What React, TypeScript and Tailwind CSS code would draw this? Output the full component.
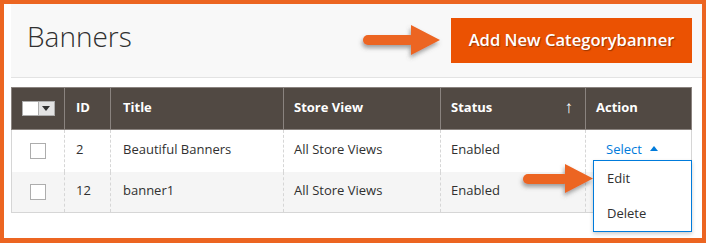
const font = { fontFamily: '"Open Sans", "Liberation Sans", sans-serif' };

interface Banner {
  id: number;
  title: string;
  storeView: string;
  status: string;
}

const banners: Banner[] = [
  { id: 2, title: "Beautiful Banners", storeView: "All Store Views", status: "Enabled" },
  { id: 12, title: "banner1", storeView: "All Store Views", status: "Enabled" },
];

// orange callout arrows drawn over the screenshot
function Arrows() {
  return (
    <svg
      className="pointer-events-none absolute left-0 top-0"
      width="706"
      height="243"
      viewBox="0 0 706 243"
    >
      <defs>
        <filter id="shadow" x="-20%" y="-40%" width="140%" height="200%">
          <feDropShadow dx="-1" dy="3" stdDeviation="2" floodColor="#555" floodOpacity="0.55" />
        </filter>
      </defs>
      <g fill="#ec6521" filter="url(#shadow)">
        <rect x="363" y="35" width="52" height="10" rx="5" />
        <polygon points="411,25 440,40 411,55" />
      </g>
      <g fill="#ec6521" filter="url(#shadow)">
        <rect x="523" y="174" width="46" height="10" rx="5" />
        <polygon points="565,164 593,178.5 565,193" />
      </g>
    </svg>
  );
}

export default function App() {
  return (
    <div className="relative h-[243px] w-[706px] overflow-hidden" style={font}>
      <div className="h-full w-full border-t-4 border-l-4 border-r-4 border-b-[5px] border-[#ec6521] bg-white">
        <div className="pl-[7px]">
          {/* page header */}
          <div className="flex h-[74px] items-center justify-between border-b border-[#e3e3e3] bg-[#f8f8f8] pl-[16px] pr-[10px]">
            <h1 className="mb-[9px] text-[28px] font-light leading-none text-[#303030]">Banners</h1>
            <button className="mb-[1px] h-[45px] w-[241px] bg-[#eb5202] text-[16.6px] font-semibold text-white [text-shadow:1px_1px_1px_rgba(0,0,0,0.35)]">
              Add New Categorybanner
            </button>
          </div>

          {/* grid */}
          <table className="mt-[9px] w-[680px] table-fixed border-collapse text-[13px] leading-[18px] text-[#303030]">
            <colgroup>
              <col className="w-[53px]" />
              <col className="w-[46px]" />
              <col className="w-[173px]" />
              <col className="w-[157px]" />
              <col className="w-[145px]" />
              <col className="w-[106px]" />
            </colgroup>
            <thead>
              <tr className="h-[42px] bg-[#514943] text-left text-white">
                <th className="border border-[#8a837f] p-0">
                  <div className="flex justify-center">
                    <div className="flex h-[15px] border border-[#adadad]">
                      <span className="h-full w-[15px] bg-white" />
                      <span className="flex h-full w-[16px] items-center justify-center border-l border-[#adadad] bg-[#e3e3e3]">
                        <span className="h-0 w-0 border-x-[4px] border-t-[5px] border-x-transparent border-t-[#303030]" />
                      </span>
                    </div>
                  </div>
                </th>
                <th className="border border-[#8a837f] pb-[4px] pl-[11px] font-bold">ID</th>
                <th className="border border-[#8a837f] pb-[4px] pl-[12px] font-bold">Title</th>
                <th className="border border-[#8a837f] pb-[4px] pl-[10px] font-bold">Store View</th>
                <th className="border border-[#8a837f] pb-[4px] pl-[10px] pr-[12px] font-bold">
                  <div className="flex items-center justify-between">
                    <span>Status</span>
                    <span className="text-[17px] font-light">↑</span>
                  </div>
                </th>
                <th className="border border-[#8a837f] pb-[4px] pl-[10px] font-bold">Action</th>
              </tr>
            </thead>
            <tbody>
              {banners.map((b, i) => (
                <tr
                  key={b.id}
                  className={`${i === 0 ? "h-[42px] bg-white" : "h-[41px] bg-[#f5f5f5]"} border-x border-[#d6d6d6] last:border-b`}
                >
                  <td className="p-0">
                    <div className="flex justify-center">
                      <span className="h-[16px] w-[16px] border border-[#adadad] bg-white" />
                    </div>
                  </td>
                  <td className="border-l border-dashed border-[#d6d6d6] pb-[4px] pl-[11px]">{b.id}</td>
                  <td className="border-l border-dashed border-[#d6d6d6] pb-[4px] pl-[12px]">{b.title}</td>
                  <td className="border-l border-dashed border-[#d6d6d6] pb-[4px] pl-[10px]">{b.storeView}</td>
                  <td className="border-l border-dashed border-[#d6d6d6] pb-[4px] pl-[10px]">{b.status}</td>
                  <td className="relative border-l border-dashed border-[#d6d6d6] pb-[4px] pl-[20px]">
                    {i === 0 && (
                      <>
                        <span className="flex items-center gap-[8px] text-[#007bdb]">
                          Select
                          <span className="h-0 w-0 border-x-[4px] border-b-[5px] border-x-transparent border-b-[#007bdb]" />
                        </span>
                        <div className="absolute left-[7px] top-[30px] z-10 flex h-[72px] w-[99px] flex-col border border-[#007bdb] bg-white pl-[13px] shadow-[0_2px_4px_rgba(0,0,0,0.2)]">
                          <span className="mt-[8px]">Edit</span>
                          <span className="mt-[17px]">Delete</span>
                        </div>
                      </>
                    )}
                  </td>
                </tr>
              ))}
            </tbody>
          </table>
        </div>
      </div>
      <Arrows />
    </div>
  );
}
